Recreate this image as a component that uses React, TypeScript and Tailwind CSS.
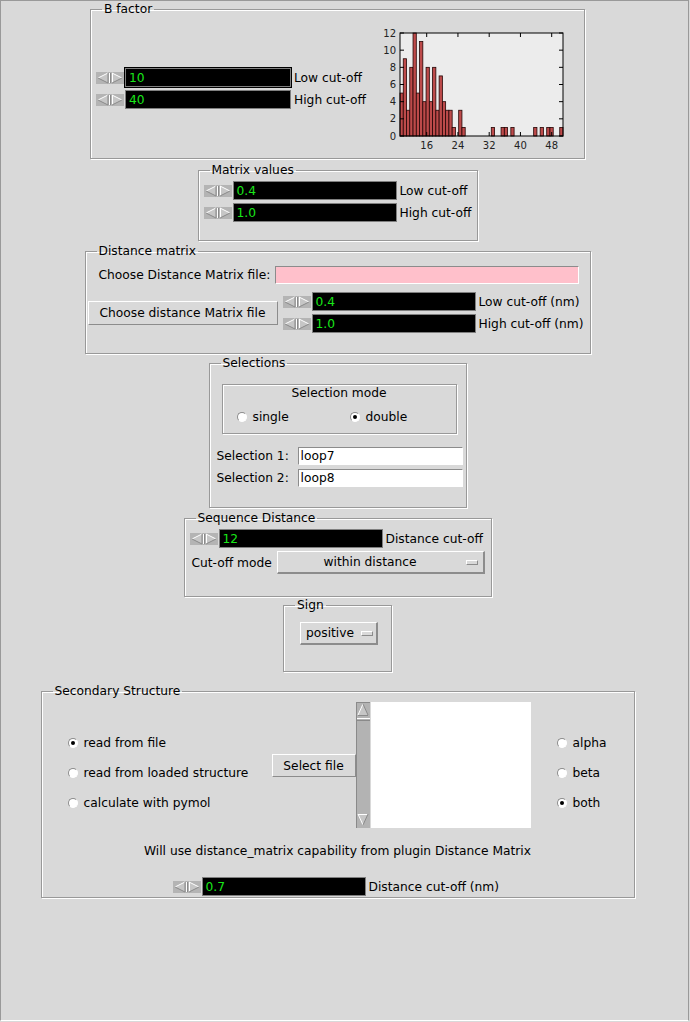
import clsx from 'clsx';
import type { ReactNode } from 'react';

// histogram counts, 50 bins between ~9.2 and ~50.8
const BINS = [
  5, 9, 3, 8, 12, 5, 11, 4, 8, 4, 8, 3, 7, 4, 3, 3, 1, 0, 3, 1, 0, 0, 0, 0, 0, 0, 0, 0, 1, 0, 0, 1, 1, 0, 1, 0, 0, 0,
  0, 0, 0, 1, 0, 1, 0, 1, 1, 0, 0, 1,
];

const Group = ({ title, className, children }: { title?: string; className?: string; children: ReactNode }) => (
  <fieldset className={clsx('m-0 min-w-0 border border-[#999999] p-0 shadow-[inset_1px_1px_0_#ffffff,1px_1px_0_#ffffff]', className)}>
    {title && <legend className="ml-[11px] px-[2px] text-[12.25px] leading-[14px]">{title}</legend>}
    {children}
  </fieldset>
);

const Arrows = () => (
  <svg width="28" height="12" viewBox="0 0 28 12" className="shrink-0">
    <rect x="0" y="0" width="28" height="12" fill="#b4b4b4" />
    <polygon points="2,6 12,1 12,11" fill="#c6c6c6" />
    <line x1="2" y1="6" x2="12" y2="1" stroke="#ffffff" />
    <line x1="2" y1="6" x2="12" y2="11" stroke="#8a8a8a" />
    <line x1="12" y1="1" x2="12" y2="11" stroke="#8a8a8a" />
    <line x1="13.5" y1="1" x2="13.5" y2="11" stroke="#ffffff" />
    <line x1="14.5" y1="1" x2="14.5" y2="11" stroke="#8a8a8a" />
    <polygon points="16,1 26,6 16,11" fill="#c6c6c6" />
    <line x1="16.5" y1="1" x2="16.5" y2="11" stroke="#ffffff" />
    <line x1="16" y1="1" x2="26" y2="6" stroke="#ffffff" />
    <line x1="16" y1="11" x2="26" y2="6" stroke="#8a8a8a" />
  </svg>
);

const Spin = ({ value, label, className }: { value: string; label: string; className?: string }) => (
  <div className="flex h-[19px] items-center">
    <Arrows />
    <div
      className={clsx(
        'ml-px flex h-full items-center border border-[#7f7f7f] bg-black pl-[3px] text-[12.25px] text-[#19e619]',
        className ?? 'w-[164px]'
      )}
    >
      {value}
    </div>
    <span className="ml-[3px] whitespace-nowrap">{label}</span>
  </div>
);

const Radio = ({ checked, label }: { checked?: boolean; label: string }) => (
  <span className="flex items-center">
    <span className="flex h-[10px] w-[10px] items-center justify-center rounded-full border border-[#8c8c8c] border-r-white border-b-white bg-white">
      {checked && <span className="h-[4px] w-[4px] rounded-full bg-black" />}
    </span>
    <span className="ml-[6px] whitespace-nowrap">{label}</span>
  </span>
);

const Histogram = () => {
  const x0 = 28;
  const y0 = 11;
  const w = 163;
  const h = 103;
  const bw = w / BINS.length;
  const yOf = (v: number) => y0 + h - v * (h / 12);
  const xOf = (v: number) => 54.7 + (v - 16) * 3.906;
  return (
    <svg width="210" height="135" viewBox="0 0 210 135" className="shrink-0" fontFamily="DejaVu Sans, sans-serif">
      <rect x={x0} y={y0} width={w} height={h} fill="#ececec" />
      {BINS.map((c, i) =>
        c > 0 ? (
          <rect
            key={i}
            x={x0 + i * bw}
            y={yOf(c)}
            width={bw}
            height={c * (h / 12)}
            fill="#bd4a4a"
            stroke="#240606"
            strokeWidth="0.8"
          />
        ) : null
      )}
      <rect x={x0} y={y0} width={w} height={h} fill="none" stroke="#000000" />
      {[0, 2, 4, 6, 8, 10, 12].map((v) => (
        <g key={v}>
          <line x1={x0} y1={yOf(v)} x2={x0 + 4} y2={yOf(v)} stroke="#000000" />
          <line x1={x0 + w - 4} y1={yOf(v)} x2={x0 + w} y2={yOf(v)} stroke="#000000" />
          <text x="24" y={yOf(v) + 3.5} textAnchor="end" fontSize="10" fill="#222222">
            {v}
          </text>
        </g>
      ))}
      {[16, 24, 32, 40, 48].map((v) => (
        <g key={v}>
          <line x1={xOf(v)} y1={y0 + h} x2={xOf(v)} y2={y0 + h - 4} stroke="#000000" />
          <line x1={xOf(v)} y1={y0} x2={xOf(v)} y2={y0 + 4} stroke="#000000" />
          <text x={xOf(v)} y="127" textAnchor="middle" fontSize="10" fill="#222222">
            {v}
          </text>
        </g>
      ))}
    </svg>
  );
};

const Scrollbar = () => (
  <svg width="14" height="126" viewBox="0 0 14 126" className="shrink-0">
    <rect x="0" y="0" width="14" height="126" fill="#b3b3b3" />
    <line x1="0.5" y1="0" x2="0.5" y2="126" stroke="#8a8a8a" />
    <line x1="0" y1="0.5" x2="14" y2="0.5" stroke="#8a8a8a" />
    <polygon points="2,13 7,2 12,13" fill="#c6c6c6" />
    <line x1="2" y1="13" x2="7" y2="2" stroke="#ffffff" />
    <line x1="7" y1="2" x2="12" y2="13" stroke="#8a8a8a" />
    <line x1="2" y1="13.5" x2="12" y2="13.5" stroke="#8a8a8a" />
    <line x1="1" y1="16.5" x2="14" y2="16.5" stroke="#ffffff" />
    <line x1="1" y1="18.5" x2="14" y2="18.5" stroke="#8a8a8a" />
    <polygon points="2,112 12,112 7,123" fill="#c6c6c6" />
    <line x1="2" y1="112.5" x2="12" y2="112.5" stroke="#ffffff" />
    <line x1="2" y1="112" x2="7" y2="123" stroke="#ffffff" />
    <line x1="12" y1="112" x2="7" y2="123" stroke="#8a8a8a" />
  </svg>
);

const raised = 'border-t border-l border-r-2 border-b-2 border-t-white border-l-white border-r-[#8c8c8c] border-b-[#8c8c8c]';
const sunken = 'border border-t-[#8c8c8c] border-l-[#8c8c8c] border-r-white border-b-white';
const button = 'border border-t-white border-l-white border-r-[#8c8c8c] border-b-[#8c8c8c] bg-[#d9d9d9] text-[12.25px]';

export default function App() {
  return (
    <div className="h-[1022px] w-[690px] bg-[#d9d9d9] font-['DejaVu_Sans',sans-serif] text-[12.25px] leading-[14px] text-black">
      <div className="h-[1021px] w-[689px] border border-[#999999] border-b-white">
        <div className="flex w-[673px] flex-col items-center">
          <Group title="B factor" className="mt-px h-[157px] w-[495px]">
            <div className="flex items-start pt-[6px] pl-[5px]">
              <div className="mt-[46px] flex w-[276px] flex-col gap-[3px]">
                <Spin value="10" label="Low cut-off" className="w-[166px] outline outline-1 outline-black" />
                <Spin value="40" label="High cut-off" className="w-[166px]" />
              </div>
              <Histogram />
            </div>
          </Group>

          <Group title="Matrix values" className="mt-[4px] h-[78px] w-[280px]">
            <div className="flex flex-col gap-[3px] pt-[4px] pl-[5px]">
              <Spin value="0.4" label="Low cut-off" />
              <Spin value="1.0" label="High cut-off" />
            </div>
          </Group>

          <Group title="Distance matrix" className="mt-[3px] h-[110px] w-[506px]">
            <div className="mt-[8px] flex items-center pl-[13px]">
              <span className="w-[176px] whitespace-nowrap">Choose Distance Matrix file:</span>
              <div className={clsx('h-[18px] w-[304px] bg-[#ffc0cb]', sunken)} />
            </div>
            <div className="mt-[8px] flex items-center pl-[2px]">
              <button className={clsx('h-[24px] w-[190px]', button)}>Choose distance Matrix file</button>
              <div className="ml-[5px] flex flex-col gap-[3px]">
                <Spin value="0.4" label="Low cut-off (nm)" />
                <Spin value="1.0" label="High cut-off (nm)" />
              </div>
            </div>
          </Group>

          <Group title="Selections" className="mt-[2px] h-[152px] w-[258px]">
            <div className="mt-[14px] ml-[12px] h-[50px] w-[235px] border border-[#999999] shadow-[inset_1px_1px_0_#ffffff,1px_1px_0_#ffffff]">
              <div className="pt-px text-center">Selection mode</div>
              <div className="mt-[10px] flex pl-[14px]">
                <div className="w-[113px]">
                  <Radio label="single" />
                </div>
                <Radio checked label="double" />
              </div>
            </div>
            <div className="mt-[13px] flex flex-col gap-[4px] pl-[7px]">
              <div className="flex items-center">
                <span className="w-[81px]">Selection 1:</span>
                <div className={clsx('flex h-[18px] w-[165px] items-center bg-white pl-[2px]', sunken)}>loop7</div>
              </div>
              <div className="flex items-center">
                <span className="w-[81px]">Selection 2:</span>
                <div className={clsx('flex h-[18px] w-[165px] items-center bg-white pl-[2px]', sunken)}>loop8</div>
              </div>
            </div>
          </Group>

          <Group title="Sequence Distance" className="mt-[3px] h-[86px] w-[308px]">
            <div className="pt-[4px] pl-[5px]">
              <Spin value="12" label="Distance cut-off" />
            </div>
            <div className="mt-[3px] flex items-center pl-[7px]">
              <span className="w-[85px] whitespace-nowrap">Cut-off mode</span>
              <div className={clsx('flex h-[23px] w-[208px] items-center', raised)}>
                <span className="flex-1 text-center">within distance</span>
                <span className={clsx('mr-[5px] ml-[3px] h-[5px] w-[12px]', 'border border-t-white border-l-white border-r-[#8c8c8c] border-b-[#8c8c8c]')} />
              </div>
            </div>
          </Group>

          <Group title="Sign" className="mt-px h-[74px] w-[109px]">
            <div className={clsx('mt-[10px] ml-[16px] flex h-[23px] w-[78px] items-center pl-[5px]', raised)}>
              <span>positive</span>
              <span className={clsx('mr-[3px] ml-auto h-[5px] w-[12px]', 'border border-t-white border-l-white border-r-[#8c8c8c] border-b-[#8c8c8c]')} />
            </div>
          </Group>

          <Group title="Secondary Structure" className="mt-[12px] h-[214px] w-[594px]">
            <div className="mt-[4px] flex items-start">
              <div className="mt-[26px] ml-[26px] flex w-[204px] flex-col">
                <div className="flex h-[30px] items-center">
                  <Radio checked label="read from file" />
                </div>
                <div className="flex h-[30px] items-center">
                  <Radio label="read from loaded structure" />
                </div>
                <div className="flex h-[30px] items-center">
                  <Radio label="calculate with pymol" />
                </div>
              </div>
              <button className={clsx('mt-[52px] h-[23px] w-[84px]', button)}>Select file</button>
              <Scrollbar />
              <div className="ml-px h-[126px] w-[160px] bg-white" />
              <div className="mt-[26px] ml-[26px] flex flex-col">
                <div className="flex h-[30px] items-center">
                  <Radio label="alpha" />
                </div>
                <div className="flex h-[30px] items-center">
                  <Radio label="beta" />
                </div>
                <div className="flex h-[30px] items-center">
                  <Radio checked label="both" />
                </div>
              </div>
            </div>
            <div className="mt-[16px] text-center">Will use distance_matrix capability from plugin Distance Matrix</div>
            <div className="mt-[19px] ml-[131px]">
              <Spin value="0.7" label="Distance cut-off (nm)" />
            </div>
          </Group>
        </div>
      </div>
    </div>
  );
}
